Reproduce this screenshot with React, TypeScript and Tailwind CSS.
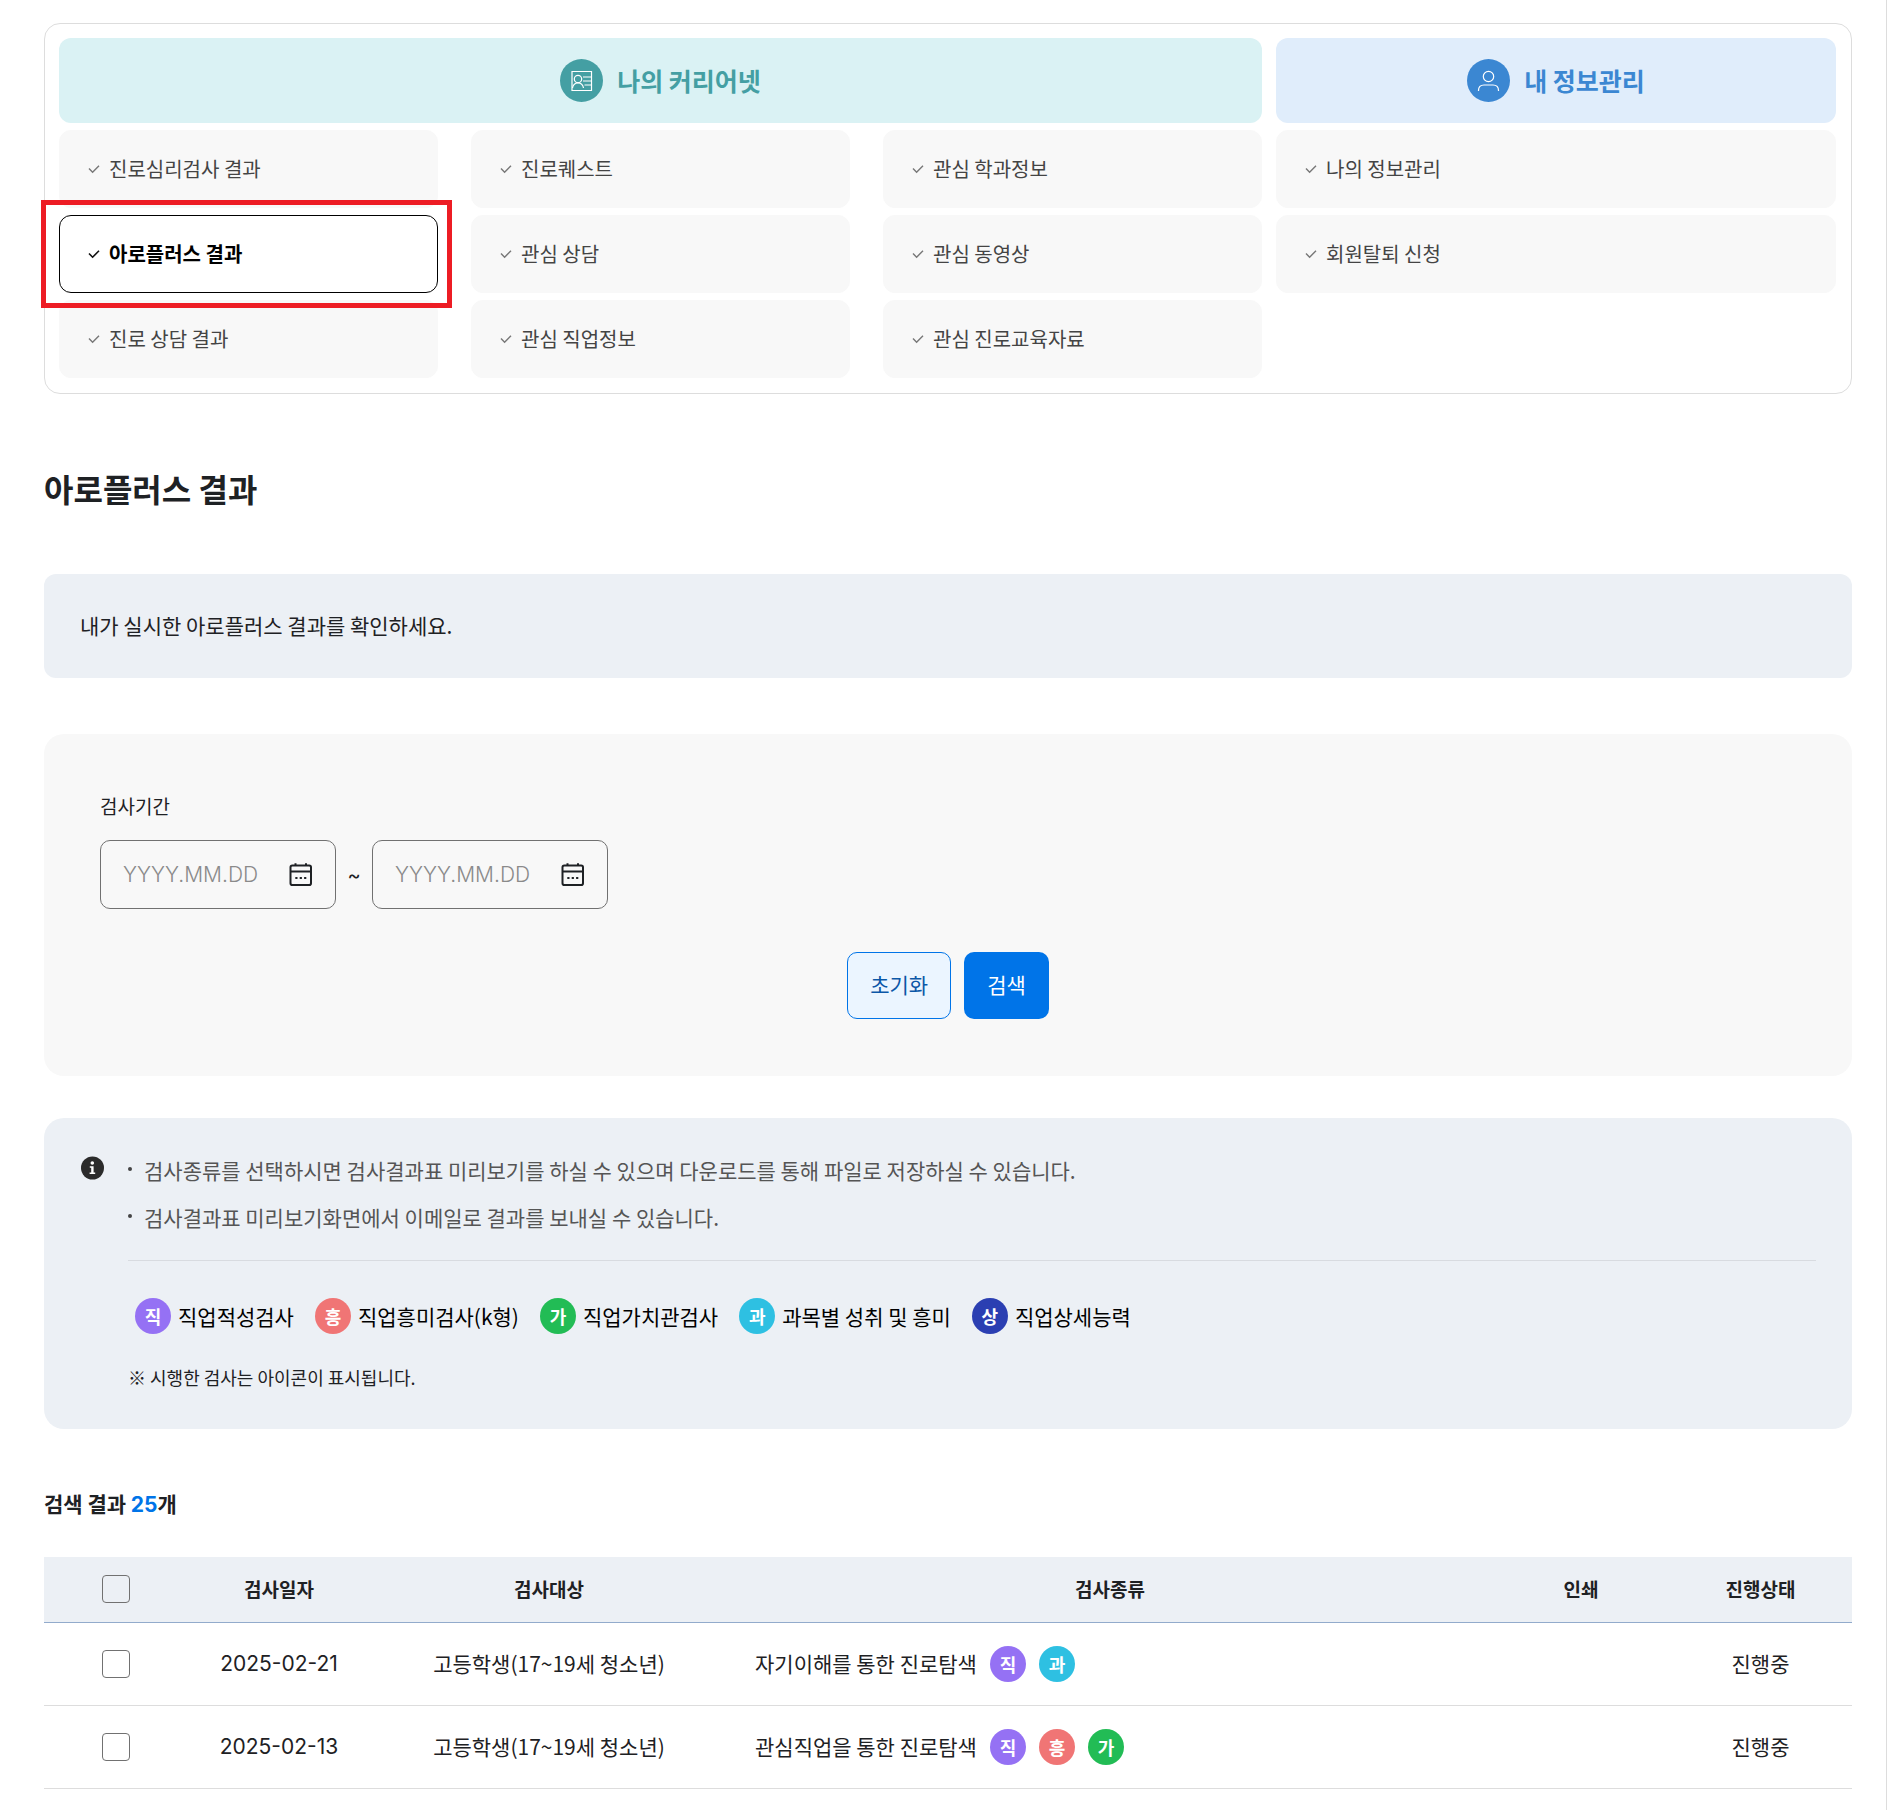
import { useState } from "react";

const careerMenu = [
  "진로심리검사 결과",
  "진로퀘스트",
  "관심 학과정보",
  "아로플러스 결과",
  "관심 상담",
  "관심 동영상",
  "진로 상담 결과",
  "관심 직업정보",
  "관심 진로교육자료",
];

const infoMenu = ["나의 정보관리", "회원탈퇴 신청"];

const badges = {
  job: { mark: "직", label: "직업적성검사", color: "bg-[#9571f4]" },
  interest: { mark: "흥", label: "직업흥미검사(k형)", color: "bg-[#f07575]" },
  value: { mark: "가", label: "직업가치관검사", color: "bg-[#22bc55]" },
  subject: { mark: "과", label: "과목별 성취 및 흥미", color: "bg-[#2ec0e2]" },
  detail: { mark: "상", label: "직업상세능력", color: "bg-[#2b3fb2]" },
};

type BadgeKey = keyof typeof badges;

const results: {
  date: string;
  target: string;
  title: string;
  tests: BadgeKey[];
  status: string;
}[] = [
  {
    date: "2025-02-21",
    target: "고등학생(17~19세 청소년)",
    title: "자기이해를 통한 진로탐색",
    tests: ["job", "subject"],
    status: "진행중",
  },
  {
    date: "2025-02-13",
    target: "고등학생(17~19세 청소년)",
    title: "관심직업을 통한 진로탐색",
    tests: ["job", "interest", "value"],
    status: "진행중",
  },
];

function Badge({ type }: { type: BadgeKey }) {
  const b = badges[type];
  return (
    <span
      className={`flex h-9 w-9 shrink-0 items-center justify-center rounded-full text-lg leading-none font-bold text-white ${b.color}`}
    >
      {b.mark}
    </span>
  );
}

function MenuItem({ label, active }: { label: string; active?: boolean }) {
  return (
    <li className={active ? "relative z-10" : "relative"}>
      <a
        href="#"
        className={`flex h-[78px] items-center gap-[9px] rounded-xl px-7 text-xl ${
          active
            ? "border border-black bg-white font-bold text-black"
            : "border border-[#f8f8f8] bg-[#f8f8f8] text-[#444]"
        }`}
      >
        <svg
          className="h-3 w-3"
          viewBox="0 0 12 12"
          fill="none"
          stroke={active ? "#111" : "#777"}
          strokeWidth={active ? 1.6 : 1.4}
        >
          <path d="M1 5.5 4.6 9.2 11 2.8" />
        </svg>
        {label}
      </a>
      {active && (
        <span className="pointer-events-none absolute -top-[15px] -right-[14px] -bottom-[15px] -left-[18px] border-5 border-[#ed1c24]" />
      )}
    </li>
  );
}

function CalendarIcon() {
  return (
    <svg className="h-6 w-6" viewBox="0 0 24 24" fill="none" stroke="#1e2124" strokeWidth="2">
      <rect x="1.500" y="2.500" width="20.500" height="19.500" rx="1.800" />
      <path d="M1.500 8.500h20.500M6.500 .3v2.500M17 .3v2.500" />
      <path d="M6.300 15h2.200M10.700 15h2.200M15.100 15h2.200" strokeWidth="2.200" />
    </svg>
  );
}

function DateField({ label }: { label: string }) {
  const [value, setValue] = useState("");
  return (
    <div className="flex h-[69px] w-[236px] items-center rounded-[10px] border border-[#717171] px-[22px]">
      <input
        type="text"
        aria-label={label}
        placeholder="YYYY.MM.DD"
        value={value}
        onChange={(e) => setValue(e.target.value)}
        className="min-w-0 flex-1 bg-transparent font-['Inter'] text-[21px] font-light outline-none placeholder:text-[#8a8a8a]"
      />
      <button type="button" aria-label="달력 열기">
        <CalendarIcon />
      </button>
    </div>
  );
}

function CheckBox({ label }: { label: string }) {
  return (
    <input
      type="checkbox"
      aria-label={label}
      className="mx-auto block h-7 w-7 appearance-none rounded border border-[#717171] checked:bg-[#0074e8]"
    />
  );
}

export default function App() {
  return (
    <div className="min-h-screen border-r border-[#ddd] bg-white pt-[23px] pr-[34px] pl-11 font-['Noto_Sans_CJK_KR',sans-serif] text-[#1e2124]">
      {/* My page menu */}
      <nav className="flex gap-[14px] rounded-2xl border border-[#ddd] pt-[14px] pr-[15px] pb-[15px] pl-[14px]">
        <div className="flex flex-[1203] flex-col gap-[7px]">
          <h2 className="flex h-[85px] items-center justify-center gap-[14px] rounded-xl bg-[#daf2f4] text-[25px] font-bold text-[#449fa3]">
            <svg className="h-[43px] w-[43px]" viewBox="0 0 43 43" fill="none" stroke="white">
              <circle cx="21.500" cy="21.500" r="21.500" fill="#449fa3" stroke="none" />
              <path d="M12 12.500h19.500v19H12z" strokeWidth="1.200" />
              <circle cx="18" cy="20" r="3.700" strokeWidth="1.200" />
              <path
                d="M12.500 29c.6-3.200 2.600-5 5.500-5s4.900 1.800 5.500 5M23 18h8M23 22h8M24.500 26h7"
                strokeWidth="1.200"
              />
            </svg>
            나의 커리어넷
          </h2>
          <ul className="grid grid-cols-3 gap-x-[33px] gap-y-[7px]">
            {careerMenu.map((m) => (
              <MenuItem key={m} label={m} active={m === "아로플러스 결과"} />
            ))}
          </ul>
        </div>
        <div className="flex flex-[560] flex-col gap-[7px]">
          <h2 className="flex h-[85px] items-center justify-center gap-[14px] rounded-xl bg-[#e0edfb] text-[25px] font-bold text-[#3b87d2]">
            <svg className="h-[43px] w-[43px]" viewBox="0 0 43 43" fill="none" stroke="white">
              <circle cx="21.500" cy="21.500" r="21.500" fill="#3b87d2" stroke="none" />
              <circle cx="21.500" cy="17.500" r="5.200" strokeWidth="1.200" />
              <path
                d="M11.500 32v-.5c0-3.300 2.200-5.500 5.500-5.500h9c3.300 0 5.500 2.200 5.500 5.500v.5"
                strokeWidth="1.200"
              />
            </svg>
            내 정보관리
          </h2>
          <ul className="grid gap-[7px]">
            {infoMenu.map((m) => (
              <MenuItem key={m} label={m} />
            ))}
          </ul>
        </div>
      </nav>

      <h1 className="mt-[70px] text-[32px] leading-[48px] font-bold">아로플러스 결과</h1>

      <p className="mt-[62px] rounded-xl bg-[#ecf0f5] px-9 pt-[35px] pb-[37px] text-[21px] leading-8">
        내가 실시한 아로플러스 결과를 확인하세요.
      </p>

      {/* Search */}
      <form
        onSubmit={(e) => e.preventDefault()}
        className="mt-14 rounded-[20px] bg-[#f8f8f8] px-14 pt-14 pb-[57px]"
      >
        <fieldset>
          <legend className="text-[19px] leading-8">검사기간</legend>
          <div className="mt-[18px] flex items-center">
            <DateField label="검사기간 시작일" />
            <span className="w-9 text-center font-['Inter'] text-xl">~</span>
            <DateField label="검사기간 종료일" />
          </div>
        </fieldset>
        <div className="mt-[43px] flex justify-center gap-[13px]">
          <button
            type="reset"
            className="h-[67px] rounded-[10px] border border-[#0074e8] bg-[#ebf5ff] px-[22px] pb-[2px] text-[21px] text-[#0b57a7]"
          >
            초기화
          </button>
          <button
            type="submit"
            className="h-[67px] rounded-[10px] bg-[#0074e8] px-[23px] pb-[2px] text-[21px] text-white"
          >
            검색
          </button>
        </div>
      </form>

      {/* Guide */}
      <section className="mt-[42px] flex gap-6 rounded-[20px] bg-[#ecf0f5] p-9">
        <svg className="mt-[2px] h-6 w-6 shrink-0" viewBox="0 0 24 24">
          <circle cx="12.500" cy="12" r="11.500" fill="#2b2b2b" />
          <circle cx="12.300" cy="7" r="1.800" fill="white" />
          <path d="M9.800 10.200h3.800v6.300h1.600v1.600H9.600v-1.600h1.600v-4.700H9.800z" fill="white" />
        </svg>
        <div className="flex-1">
          <ul className="space-y-[15px] text-[21px] leading-8 text-[#555]">
            {[
              "검사종류를 선택하시면 검사결과표 미리보기를 하실 수 있으며 다운로드를 통해 파일로 저장하실 수 있습니다.",
              "검사결과표 미리보기화면에서 이메일로 결과를 보내실 수 있습니다.",
            ].map((t) => (
              <li key={t} className="flex gap-3">
                <span className="mt-[13px] h-1 w-1 shrink-0 rounded-full bg-[#444]" />
                {t}
              </li>
            ))}
          </ul>
          <div className="mt-[27px] flex flex-wrap gap-[21px] border-t border-[#d8dbe0] pt-[37px] pl-[7px]">
            {(Object.keys(badges) as BadgeKey[]).map((k) => (
              <span key={k} className="flex items-center gap-[7px] text-[21px] leading-8 text-black">
                <Badge type={k} />
                {badges[k].label}
              </span>
            ))}
          </div>
          <p className="mt-[27px] text-lg leading-8">※ 시행한 검사는 아이콘이 표시됩니다.</p>
        </div>
      </section>

      <p className="mt-[58px] text-[21px] leading-8 font-bold">
        검색 결과 <span className="font-['Inter'] text-[#0074e8]">25</span>개
      </p>

      <table className="mt-9 w-full table-fixed text-center text-[21px]">
        <colgroup>
          <col className="w-[143px]" />
          <col className="w-[184px]" />
          <col className="w-[356px]" />
          <col />
          <col className="w-[176px]" />
          <col className="w-[183px]" />
        </colgroup>
        <thead>
          <tr className="h-[65px] border-b border-[#92abcc] bg-[#ecf0f5] text-[19px]">
            <th>
              <CheckBox label="전체 선택" />
            </th>
            <th className="font-bold">검사일자</th>
            <th className="font-bold">검사대상</th>
            <th className="font-bold">검사종류</th>
            <th className="font-bold">인쇄</th>
            <th className="font-bold">진행상태</th>
          </tr>
        </thead>
        <tbody>
          {results.map((r) => (
            <tr key={r.date} className="h-[83px] border-b border-[#ddd]">
              <td>
                <CheckBox label={`${r.date} 선택`} />
              </td>
              <td className="font-['Inter']">{r.date}</td>
              <td>{r.target}</td>
              <td>
                <div className="flex items-center gap-[13px] pl-7">
                  {r.title}
                  {r.tests.map((t) => (
                    <Badge key={t} type={t} />
                  ))}
                </div>
              </td>
              <td />
              <td>{r.status}</td>
            </tr>
          ))}
        </tbody>
      </table>
    </div>
  );
}
